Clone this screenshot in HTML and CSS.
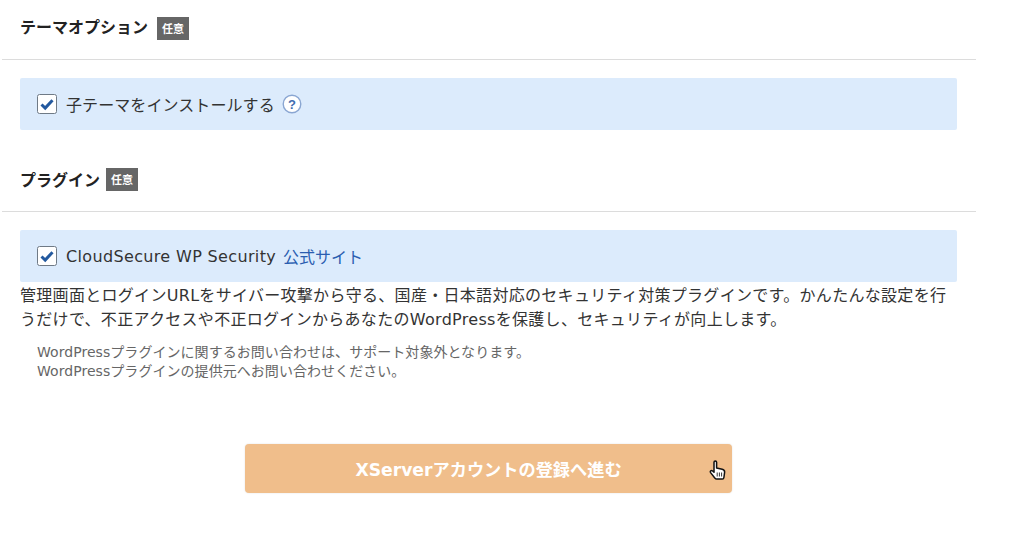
FILE: index.html
```html
<!DOCTYPE html>
<html lang="ja">
<head>
  <meta charset="UTF-8" />
  <title>テーマオプション</title>
  <link rel="stylesheet" href="styles.css">
</head>
<body>
  <div class="wrap">
    <div class="section-head">
      <h2>テーマオプション</h2>
      <span class="tag">任意</span>
    </div>
    <div class="panel">
      <label class="check">
        <svg class="box" viewBox="0 0 20 20" width="20" height="20">
          <rect x="0.5" y="0.5" width="19" height="19" rx="2" fill="#fff" stroke="#6f7a86"/>
          <path d="M4.5 10.5 L8.2 14 L15.5 6.2" fill="none" stroke="#23599f" stroke-width="3"/>
        </svg>
        <span>子テーマをインストールする</span>
      </label>
      <svg class="help" viewBox="0 0 20 20" width="20" height="20">
        <circle cx="10" cy="10" r="8.8" fill="#fff" stroke="#8aa6d2" stroke-width="1.4"/>
        <text x="10" y="14.6" text-anchor="middle" class="help-mark">?</text>
      </svg>
    </div>

    <div class="section-head second">
      <h2>プラグイン</h2>
      <span class="tag">任意</span>
    </div>
    <div class="panel">
      <label class="check">
        <svg class="box" viewBox="0 0 20 20" width="20" height="20">
          <rect x="0.5" y="0.5" width="19" height="19" rx="2" fill="#fff" stroke="#6f7a86"/>
          <path d="M4.5 10.5 L8.2 14 L15.5 6.2" fill="none" stroke="#23599f" stroke-width="3"/>
        </svg>
        <span class="latin">CloudSecure WP Security</span>
      </label>
      <a href="#" class="site-link">公式サイト</a>
    </div>
    <p class="desc">管理画面とログインURLをサイバー攻撃から守る、国産・日本語対応のセキュリティ対策プラグインです。かんたんな設定を行うだけで、不正アクセスや不正ログインからあなたのWordPressを保護し、セキュリティが向上します。</p>
    <p class="note">WordPressプラグインに関するお問い合わせは、サポート対象外となります。<br>WordPressプラグインの提供元へお問い合わせください。</p>

    <div class="actions">
      <button class="next-btn">XServerアカウントの登録へ進む</button>
      <svg class="cursor" viewBox="0 0 18 22" width="18" height="22">
        <path d="M5 2.2c0-1.5 2.6-1.5 2.6 0V8l5.6 1.3c1.7.4 2.6 1.4 2.4 3l-.7 5.2c-.1.9-.7 1.6-1.6 1.6H7.6c-.7 0-1.2-.3-1.6-.9L1.6 12.6c-.9-1.3.7-2.7 2-1.6L5 12.2z" fill="#fff" stroke="#111" stroke-width="1.5" stroke-linejoin="round"/>
        <path d="M8.2 12.5v4M10.4 12.5v4M12.6 12.5v4" stroke="#333" stroke-width="1"/>
      </svg>
    </div>
  </div>
</body>
</html>
```

FILE: styles.css
```css
body {
  margin: 0;
  background-color: #fff;
  color: #333;
  font-family: "DejaVu Sans", "Noto Sans CJK JP", sans-serif;
  overflow: hidden;
}
.wrap {
  width: 976px;
  height: 538px;
}
.section-head {
  display: flex;
  align-items: center;
  gap: 9px;
  height: 60px;
  margin-left: 2px;
  padding: 0 0 4px 18px;
  box-sizing: border-box;
  border-bottom: 1px solid #dcdcdc;
}
.section-head.second {
  margin-top: 28px;
  height: 54px;
  padding-bottom: 12px;
}
h2 {
  margin: 0 0 3px;
  font-family: "Noto Sans CJK JP", sans-serif;
  font-size: 16px;
  font-weight: 700;
  color: #222;
}
.second h2 {
  margin-bottom: 0;
}
.tag {
  background-color: #666;
  color: #fff;
  font-family: "Noto Sans CJK JP", sans-serif;
  font-size: 11px;
  font-weight: 700;
  line-height: 23px;
  width: 32px;
  text-align: center;
  margin-top: 2px;
}
.section-head.second .tag {
  margin-left: -3px;
}
.panel {
  display: flex;
  align-items: center;
  gap: 7px;
  width: 937px;
  height: 52px;
  margin: 18px 0 0 20px;
  padding-left: 17px;
  box-sizing: border-box;
  background-color: #dcebfc;
  border-radius: 2px;
  font-size: 16px;
}
.check {
  display: flex;
  align-items: center;
  gap: 9px;
  font-family: "Noto Sans CJK JP", sans-serif;
  letter-spacing: 0.08px;
}
.latin {
  font-family: "DejaVu Sans", sans-serif;
  font-size: 16px;
  letter-spacing: 0.35px;
}
.help-mark {
  font-family: "Liberation Sans", sans-serif;
  font-size: 13px;
  font-weight: 700;
  fill: #3f6db0;
}
.site-link {
  color: #2a5db0;
  text-decoration: none;
  font-family: "Noto Sans CJK JP", sans-serif;
  font-size: 16px;
}
.desc {
  margin: 2px 0 0 20px;
  width: 937px;
  font-family: "DejaVu Sans", "Noto Sans CJK JP", sans-serif;
  font-size: 16px;
  line-height: 24px;
  letter-spacing: 0.3px;
}
.note {
  margin: 11px 0 0 37px;
  font-size: 14px;
  line-height: 19px;
  letter-spacing: 0.05px;
  color: #666;
}
.actions {
  position: relative;
  width: 487px;
  margin: 63px 0 0 245px;
}
.next-btn {
  display: block;
  width: 100%;
  height: 49px;
  border: 0;
  border-radius: 4px;
  background-color: #f0be8b;
  color: #fff;
  font-family: "DejaVu Sans", "Noto Sans CJK JP", sans-serif;
  font-size: 17.2px;
  font-weight: 700;
  box-shadow: 0 0 2px rgba(0, 0, 0, 0.12);
}
.cursor {
  position: absolute;
  left: 464px;
  top: 16px;
}
```
